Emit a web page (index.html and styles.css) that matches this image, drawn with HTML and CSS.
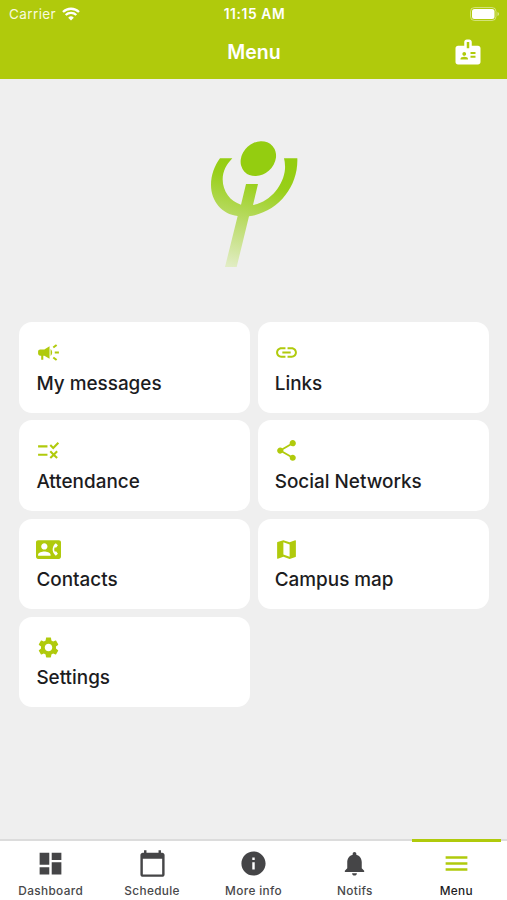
FILE: index.html
```html
<!DOCTYPE html>
<html lang="en">
<head>
  <meta charset="UTF-8" />
  <meta name="viewport" content="width=device-width, initial-scale=1" />
  <title>Menu</title>
  <link rel="stylesheet" href="styles.css">
</head>
<body>
  <header class="header">
    <div class="status-bar">
      <div class="carrier">
        <span>Carrier</span>
        <svg class="wifi" viewBox="0 0 18 14">
          <path d="M9 13.6 6.2 10.700a4 4 0 0 1 5.600 0z" fill="#fff"/>
          <path d="M3.700 8a7.600 7.600 0 0 1 10.600 0M1 5a11.500 11.500 0 0 1 16 0" fill="none" stroke="#fff" stroke-width="2.300"/>
        </svg>
      </div>
      <span class="time">11:15 AM</span>
      <div class="battery-wrap">
        <svg class="battery" viewBox="0 0 30 14">
          <rect x=".5" y=".5" width="25.500" height="13" rx="4" fill="none" stroke="#fff" stroke-opacity=".45"/>
          <rect x="2" y="2" width="22.500" height="10" rx="2.500" fill="#fff"/>
          <path d="M27.500 5v4q1.500-.6 1.500-2t-1.500-2z" fill="#fff" fill-opacity=".55"/>
        </svg>
      </div>
    </div>
    <div class="title-bar">
      <h1>Menu</h1>
      <svg class="badge-icon" viewBox="0 0 24 24">
        <path fill-rule="evenodd" d="M20 7h-5V4c0-1.100-.9-2-2-2h-2c-1.100 0-2 .9-2 2v3H4c-1.100 0-2 .9-2 2v11c0 1.100.9 2 2 2h16c1.100 0 2-.9 2-2V9c0-1.100-.9-2-2-2zM9 12c.83 0 1.500.67 1.500 1.500S9.830 15 9 15s-1.500-.67-1.500-1.500S8.170 12 9 12zm3 6H6v-.43c0-.6.36-1.150.92-1.390a5.200 5.200 0 0 1 4.160 0c.56.24.92.79.92 1.390V18zm1-9h-2V4h2v5zm5 7.500h-4V15h4v1.500zm0-3h-4V12h4v1.500z"/>
      </svg>
    </div>
  </header>

  <main class="content">
    <svg class="logo" viewBox="-3 0 390 465">
      <defs>
        <linearGradient id="fade" gradientUnits="userSpaceOnUse" x1="220" y1="100" x2="130" y2="430">
          <stop offset="0" stop-color="#94cd10"/>
          <stop offset=".22" stop-color="#98cf18"/>
          <stop offset=".55" stop-color="#b7da60"/>
          <stop offset="1" stop-color="#e2edc6"/>
        </linearGradient>
      </defs>
      <ellipse cx="205" cy="101" rx="57" ry="48" transform="rotate(-42 205 101)" fill="#94cd10"/>
      <path fill="url(#fade)" d="M90 100h37C109 119 98 139 98 163c0 36 23 67 55 76L168 177h36L189 240c54-10 92-61 96-108q1-17-3-32h40c3 86-58 162-145 174L140 426h-35L143 273C96 268 63 229 63 180c0-30 11-58 27-80z"/>
    </svg>

    <div class="grid">
      <div class="card">
        <svg class="icon" viewBox="0 0 24 24"><path d="M18 11v2h4v-2h-4zm-2 6.610c.96.71 2.210 1.650 3.200 2.390.4-.53.8-1.070 1.200-1.600-.99-.74-2.240-1.680-3.200-2.400-.4.54-.8 1.080-1.200 1.610zM20.400 5.600c-.4-.53-.8-1.070-1.200-1.600-.99.74-2.240 1.680-3.200 2.400.4.53.8 1.070 1.200 1.600.96-.72 2.210-1.650 3.200-2.400zM4 9c-1.100 0-2 .9-2 2v2c0 1.100.9 2 2 2h1v4h2v-4h1l5 3V6L8 9H4zm11.500 3c0-1.330-.58-2.530-1.500-3.350v6.690c.92-.81 1.500-2.010 1.500-3.340z"/></svg>
        <span>My messages</span>
      </div>
      <div class="card">
        <svg class="icon" viewBox="0 0 24 24"><path d="M3.900 12c0-1.710 1.390-3.100 3.100-3.100h4V7H7c-2.760 0-5 2.240-5 5s2.240 5 5 5h4v-1.900H7c-1.710 0-3.100-1.390-3.100-3.100zM8 13h8v-2H8v2zm9-6h-4v1.900h4c1.710 0 3.100 1.390 3.100 3.100s-1.390 3.100-3.100 3.100h-4V17h4c2.760 0 5-2.240 5-5s-2.240-5-5-5z"/></svg>
        <span>Links</span>
      </div>
      <div class="card">
        <svg class="icon" viewBox="0 0 24 24"><path d="M16.540 11 13 7.460l1.410-1.410 2.120 2.120 4.240-4.240 1.410 1.410L16.540 11zM11 7H2v2h9V7zm10 6.410L19.590 12 17 14.590 14.410 12 13 13.410 15.590 16 13 18.590 14.410 20 17 17.410 19.590 20 21 18.590 18.410 16 21 13.410zM11 15H2v2h9v-2z"/></svg>
        <span>Attendance</span>
      </div>
      <div class="card">
        <svg class="icon" viewBox="0 0 24 24"><path d="M18 16.080c-.76 0-1.440.3-1.960.77L8.910 12.700c.05-.23.09-.46.09-.7s-.04-.47-.09-.7l7.050-4.110c.54.5 1.250.81 2.040.81 1.660 0 3-1.340 3-3s-1.340-3-3-3-3 1.340-3 3c0 .24.04.47.09.7L8.040 9.810C7.500 9.310 6.790 9 6 9c-1.660 0-3 1.340-3 3s1.340 3 3 3c.79 0 1.500-.31 2.040-.81l7.120 4.160c-.05.21-.08.43-.08.65 0 1.610 1.310 2.920 2.920 2.920s2.920-1.310 2.920-2.920-1.310-2.920-2.920-2.920z"/></svg>
        <span>Social Networks</span>
      </div>
      <div class="card">
        <svg class="icon" viewBox="0 0 24 24"><path d="M22 3H2C.9 3 0 3.900 0 5v14c0 1.100.9 2 2 2h20c1.100 0 1.990-.9 1.990-2L24 5c0-1.100-.9-2-2-2zM8 6c1.660 0 3 1.340 3 3s-1.340 3-3 3-3-1.340-3-3 1.340-3 3-3zm6 12H2v-1c0-2 4-3.100 6-3.100s6 1.100 6 3.100v1zm3.850-4h1.640L21 16l-1.990 1.990c-1.310-.98-2.280-2.380-2.730-3.990-.18-.64-.28-1.310-.28-2s.1-1.360.28-2c.45-1.620 1.420-3.010 2.730-3.990L21 8l-1.510 2h-1.640c-.22.63-.35 1.300-.35 2s.13 1.370.35 2z"/></svg>
        <span>Contacts</span>
      </div>
      <div class="card">
        <svg class="icon" viewBox="0 0 24 24"><path d="M20.500 3l-.16.03L15 5.100 9 3 3.360 4.900c-.21.07-.36.25-.36.48V20.500c0 .28.22.5.5.5l.16-.03L9 18.900l6 2.100 5.640-1.900c.21-.07.36-.25.36-.48V3.500c0-.28-.22-.5-.5-.5zM15 19l-6-2.110V5l6 2.110V19z"/></svg>
        <span>Campus map</span>
      </div>
      <div class="card">
        <svg class="icon" viewBox="0 0 24 24"><path d="M19.140 12.940c.04-.3.06-.61.06-.94 0-.32-.02-.64-.07-.94l2.030-1.580c.18-.14.23-.41.12-.61l-1.920-3.320c-.12-.22-.37-.29-.59-.22l-2.390.96c-.5-.38-1.030-.7-1.620-.94l-.36-2.540c-.04-.24-.24-.41-.48-.41h-3.840c-.24 0-.43.17-.47.41l-.36 2.540c-.59.24-1.130.57-1.620.94l-2.390-.96c-.22-.08-.47 0-.59.22L2.740 8.870c-.12.21-.08.47.12.61l2.030 1.580c-.05.3-.09.63-.09.94s.02.64.07.94l-2.030 1.580c-.18.14-.23.41-.12.61l1.920 3.320c.12.22.37.29.59.22l2.390-.96c.5.38 1.030.7 1.620.94l.36 2.540c.05.24.24.41.48.41h3.840c.24 0 .44-.17.47-.41l.36-2.540c.59-.24 1.130-.56 1.620-.94l2.390.96c.22.08.47 0 .59-.22l1.920-3.320c.12-.22.07-.47-.12-.61l-2.010-1.580zM12 15.600c-1.980 0-3.600-1.620-3.600-3.600s1.620-3.600 3.600-3.600 3.600 1.620 3.600 3.600-1.620 3.600-3.600 3.600z"/></svg>
        <span>Settings</span>
      </div>
    </div>
  </main>

  <nav class="tabs">
    <div class="tab">
      <svg viewBox="0 0 24 24"><path d="M3 13h8V3H3v10zm0 8h8v-6H3v6zm10 0h8V11h-8v10zm0-18v6h8V3h-8z"/></svg>
      <span>Dashboard</span>
    </div>
    <div class="tab">
      <svg viewBox="0 0 24 24"><path d="M20 3h-1V1h-2v2H7V1H5v2H4c-1.100 0-2 .9-2 2v16c0 1.100.9 2 2 2h16c1.100 0 2-.9 2-2V5c0-1.100-.9-2-2-2zm0 18H4V8h16v13z"/></svg>
      <span>Schedule</span>
    </div>
    <div class="tab">
      <svg viewBox="0 0 24 24"><path d="M12 2C6.480 2 2 6.480 2 12s4.480 10 10 10 10-4.480 10-10S17.520 2 12 2zm1 15h-2v-6h2v6zm0-8h-2V7h2v2z"/></svg>
      <span>More info</span>
    </div>
    <div class="tab">
      <svg viewBox="0 0 24 24"><path d="M12 22c1.100 0 2-.9 2-2h-4c0 1.100.89 2 2 2zm6-6v-5c0-3.070-1.640-5.640-4.500-6.320V4c0-.83-.67-1.500-1.500-1.500s-1.500.67-1.500 1.500v.68C7.630 5.360 6 7.920 6 11v5l-2 2v1h16v-1l-2-2z"/></svg>
      <span>Notifs</span>
    </div>
    <div class="tab active">
      <svg viewBox="0 0 24 24"><path d="M3 18h18v-2H3v2zm0-5h18v-2H3v2zm0-7v2h18V6H3z"/></svg>
      <span>Menu</span>
    </div>
  </nav>
</body>
</html>
```
FILE: styles.css
```css
* { box-sizing: border-box; }
body {
  margin: 0;
  height: 900px;
  display: flex;
  flex-direction: column;
  overflow: hidden;
  background: #efefef;
  color: #1c1c1e;
  font-family: Inter, "Liberation Sans", sans-serif;
}
svg { display: block; flex: none; }

/* header */
.header { height: 79px; background: #b0ca0c; color: #fff; }
.status-bar {
  display: grid;
  grid-template-columns: 1fr auto 1fr;
  align-items: center;
  height: 27px;
  padding: 0 7px 0 9px;
  font-size: 13.5px;
}
.carrier { display: flex; align-items: center; gap: 6px; color: #f8fadf; letter-spacing: 0.4px; }
.wifi { width: 18px; height: 14px; }
.time { font-weight: 600; font-size: 13.8px; letter-spacing: 0.6px; }
.battery-wrap { display: flex; justify-content: flex-end; }
.battery { width: 30px; height: 14px; }
.title-bar {
  display: grid;
  grid-template-columns: 1fr auto 1fr;
  align-items: center;
  height: 50px;
  padding: 0 24px;
}
.title-bar h1 { grid-column: 2; margin: 0 0 0 1px; font-size: 19.5px; font-weight: 600; }
.badge-icon { width: 30px; height: 30px; justify-self: end; fill: #fff; }

/* content */
.content { flex: 1; padding: 46px 18.5px 0 19.4px; }
.logo { width: 130px; height: 155px; margin: 0 auto; }
.grid {
  display: grid;
  grid-template-columns: 1fr 1fr;
  grid-auto-rows: 90.5px;
  gap: 7.6px;
  margin-top: 42.4px;
}
.card {
  padding: 18px 17px;
  background: #fff;
  border-radius: 13px;
}
.card span {
  display: block;
  margin-top: 5.5px;
  font-size: 18.9px;
  line-height: 26px;
  font-weight: 500;
  white-space: nowrap;
}
.icon { width: 25px; height: 25px; margin-left: -0.6px; fill: #b0ca0c; }

/* bottom tabs */
.tabs {
  display: flex;
  height: 61px;
  background: #fff;
  border-top: 2px solid #dcdcdc;
}
.tab {
  position: relative;
  flex: 1;
  display: flex;
  flex-direction: column;
  align-items: center;
  padding-top: 8px;
  color: #48484a;
  font-size: 11.8px;
  font-weight: 500;
  letter-spacing: 0.35px;
}
.tab svg { width: 29px; height: 29px; fill: #454547; }
.tab span { margin-top: 5px; line-height: 16px; }
.tab.active { color: #1c1c1e; }
.tab.active svg { fill: #b0ca0c; }
.tab.active::before {
  content: "";
  position: absolute;
  top: -2px;
  left: 6px;
  right: 6px;
  height: 3px;
  background: #b0ca0c;
}
```
